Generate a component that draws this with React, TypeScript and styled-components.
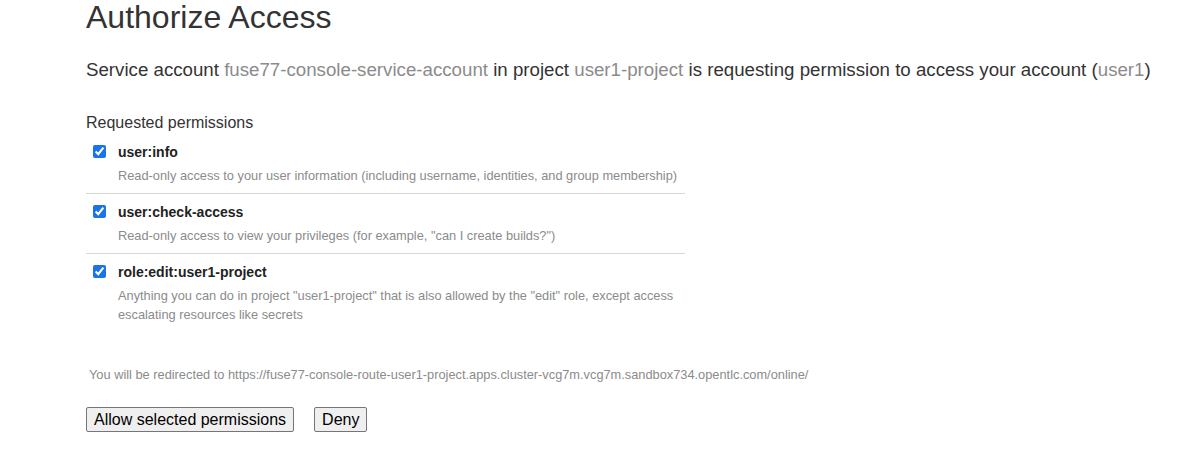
import React from "react";
import styled, { createGlobalStyle } from "styled-components";

const Global = createGlobalStyle`
  html, body { margin: 0; padding: 0; background: #fff; }
  body { font-family: "Liberation Sans", Arial, Helvetica, sans-serif; color: #333; }
`;

const Page = styled.div`
  padding: 0 0 0 86px;
`;

const Title = styled.h1`
  font-size: 32px;
  font-weight: 400;
  line-height: 34px;
  margin: 0;
  color: #333;
`;

const Intro = styled.p`
  font-size: 18.7px;
  line-height: 22px;
  margin: 25px 0 0 0;
  white-space: nowrap;
`;

const Muted = styled.span`
  color: #8b8b8b;
`;

const Form = styled.form`
  margin-top: 32px;
`;

const Heading = styled.div`
  font-size: 16px;
  line-height: 20px;
  margin-bottom: 1px;
`;

const List = styled.div`
  width: 599px;
`;

const Item = styled.label<{ $last?: boolean }>`
  display: grid;
  grid-template-columns: 32px 1fr;
  padding: 9px 0 ${(p) => (p.$last ? "0" : "8px")} 0;
  border-bottom: ${(p) => (p.$last ? "none" : "1px solid #d6d6d6")};
`;

const Check = styled.input`
  margin: 2px 0 0 7px;
  width: 13px;
  height: 13px;
  accent-color: #1a73e8;
`;

const Name = styled.div`
  font-size: 14px;
  font-weight: 700;
  line-height: 18px;
  color: #222;
`;

const Desc = styled.div`
  font-size: 12.8px;
  line-height: 19px;
  color: #8b8b8b;
  margin-top: 5px;
`;

const Redirect = styled.div`
  font-size: 12.8px;
  line-height: 16px;
  color: #8b8b8b;
  margin: 43px 0 0 3px;
`;

const Buttons = styled.div`
  display: flex;
  gap: 20px;
  margin-top: 24px;
`;

const Button = styled.button`
  font-family: "Liberation Sans", Arial, Helvetica, sans-serif;
  font-size: 16px;
  color: #000;
  background: #efefef;
  border: 1px solid #767676;
  border-radius: 2px;
  padding: 2px 7px;
  height: 25px;
  line-height: 19px;
`;

const perms = [
  {
    name: "user:info",
    desc: "Read-only access to your user information (including username, identities, and group membership)",
  },
  {
    name: "user:check-access",
    desc: 'Read-only access to view your privileges (for example, "can I create builds?")',
  },
  {
    name: "role:edit:user1-project",
    desc: 'Anything you can do in project "user1-project" that is also allowed by the "edit" role, except access escalating resources like secrets',
  },
];

export default function App() {
  return (
    <>
      <Global />
      <Page>
        <Title>Authorize Access</Title>
        <Intro>
          Service account <Muted>fuse77-console-service-account</Muted> in project{" "}
          <Muted>user1-project</Muted> is requesting permission to access your account (
          <Muted>user1</Muted>)
        </Intro>
        <Form onSubmit={(e) => e.preventDefault()}>
          <Heading>Requested permissions</Heading>
          <List>
            {perms.map((p, i) => (
              <Item key={p.name} $last={i === perms.length - 1}>
                <Check type="checkbox" defaultChecked />
                <div>
                  <Name>{p.name}</Name>
                  <Desc>{p.desc}</Desc>
                </div>
              </Item>
            ))}
          </List>
          <Redirect>
            You will be redirected to
            https://fuse77-console-route-user1-project.apps.cluster-vcg7m.vcg7m.sandbox734.opentlc.com/online/
          </Redirect>
          <Buttons>
            <Button type="submit">Allow selected permissions</Button>
            <Button type="button">Deny</Button>
          </Buttons>
        </Form>
      </Page>
    </>
  );
}
